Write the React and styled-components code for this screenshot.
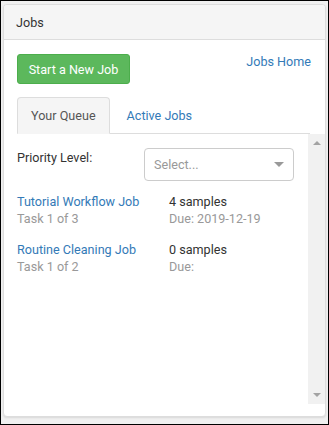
import React from "react";
import styled, { createGlobalStyle } from "styled-components";

const Global = createGlobalStyle`
  html, body { margin: 0; padding: 0; }
  body {
    width: 329px; height: 425px; box-sizing: border-box;
    border: 1px solid #000; background: #f0f0f0;
    font-family: Roboto, "Liberation Sans", sans-serif; font-size: 12.6px; color: #333;
    overflow: hidden;
  }
`;

const Panel = styled.div`
  margin: 3px 2px 0 2px;
  height: 413px;
  box-sizing: border-box;
  background: #fff;
  border: 1px solid #ddd;
  border-radius: 4px;
  box-shadow: 0 1px 2px rgba(0,0,0,0.1);
  display: flex;
  flex-direction: column;
  overflow: hidden;
`;

const Header = styled.div`
  height: 35px;
  box-sizing: border-box;
  padding: 0 12px;
  display: flex;
  align-items: center;
  background: #f5f5f5;
  border-bottom: 1px solid #ddd;
  color: #333;
`;

const Body = styled.div`
  flex: 1;
  display: flex;
  flex-direction: column;
  padding: 14px 15px 12px 13px;
  min-height: 0;
`;

const TopRow = styled.div`
  display: flex;
  justify-content: space-between;
  align-items: flex-start;
`;

const GreenButton = styled.button`
  height: 30px;
  width: 113px;
  padding: 0;
  border: 1px solid #4cae4c;
  border-radius: 3px;
  background: #5cb85c;
  color: #fff;
  font-family: inherit;
  font-size: 12.6px;
`;

const Link = styled.a`
  color: #337ab7;
  text-decoration: none;
  cursor: pointer;
  white-space: nowrap;
`;

const HomeLink = styled(Link)`
  margin-top: 0px;
  margin-right: -1px;
`;

const Tabs = styled.div`
  display: flex;
  margin-top: 13px;
  border-bottom: 1px solid #ddd;
  height: 37px;
  box-sizing: border-box;
`;

const Tab = styled.div`
  height: 37px;
  box-sizing: border-box;
  padding: 0 13px 1px;
  display: flex;
  align-items: center;
  white-space: nowrap;
  border: 1px solid ${p => (p.$active ? "#ddd" : "transparent")};
  border-bottom-color: ${p => (p.$active ? "#f5f5f5" : "transparent")};
  border-radius: 4px 4px 0 0;
  background: ${p => (p.$active ? "#f5f5f5" : "transparent")};
  color: ${p => (p.$active ? "#555" : "#337ab7")};
  margin-right: 3px;
`;

const Scroller = styled.div`
  flex: 1;
  margin: 0 -15px 0 -13px;
  display: flex;
  min-height: 0;
`;

const ScrollContent = styled.div`
  flex: 1;
  padding: 14px 0 0 13px;
  overflow: hidden;
`;

const Track = styled.div`
  width: 17px;
  background: #f1f1f1;
  display: flex;
  flex-direction: column;
  justify-content: space-between;
  align-items: center;
  padding: 7px 0 7px;
`;

const Arrow = styled.span`
  width: 0; height: 0;
  border-left: 4px solid transparent;
  border-right: 4px solid transparent;
  ${p => (p.$up ? "border-bottom: 4px solid #a3a3a3;" : "border-top: 4px solid #a3a3a3;")}
`;

const FilterRow = styled.div`
  display: grid;
  grid-template-columns: 127px 150px;
  align-items: start;
`;

const Label = styled.div`
  color: #333;
  line-height: 17px;
  margin-top: 1px;
`;

const Select = styled.div`
  height: 33px;
  box-sizing: border-box;
  border: 1px solid #ccc;
  border-radius: 4px;
  display: flex;
  align-items: center;
  justify-content: space-between;
  padding: 0 9px 0 9px;
  color: #999;
  background: #fff;
`;

const Caret = styled.span`
  width: 0; height: 0;
  border-left: 5px solid transparent;
  border-right: 5px solid transparent;
  border-top: 5px solid #999;
`;

const JobList = styled.div`
  display: flex;
  flex-direction: column;
  gap: 14px;
  margin-top: 12px;
`;

const JobRow = styled.div`
  display: grid;
  grid-template-columns: 152px 1fr;
  line-height: 17px;
`;

const Muted = styled.div`
  color: #999;
`;

const Dark = styled.div`
  color: #333;
`;

const jobs = [
  { name: "Tutorial Workflow Job", task: "Task 1 of 3", samples: "4 samples", due: "Due: 2019-12-19" },
  { name: "Routine Cleaning Job", task: "Task 1 of 2", samples: "0 samples", due: "Due:" },
];

export default function App() {
  return (
    <>
      <Global />
      <Panel>
        <Header>Jobs</Header>
        <Body>
          <TopRow>
            <GreenButton>Start a New Job</GreenButton>
            <HomeLink>Jobs Home</HomeLink>
          </TopRow>
          <Tabs>
            <Tab $active>Your Queue</Tab>
            <Tab>Active Jobs</Tab>
          </Tabs>
          <Scroller>
            <ScrollContent>
              <FilterRow>
                <Label>Priority Level:</Label>
                <Select>
                  <span>Select...</span>
                  <Caret />
                </Select>
              </FilterRow>
              <JobList>
                {jobs.map(j => (
                  <JobRow key={j.name}>
                    <div>
                      <Link>{j.name}</Link>
                      <Muted>{j.task}</Muted>
                    </div>
                    <div>
                      <Dark>{j.samples}</Dark>
                      <Muted>{j.due}</Muted>
                    </div>
                  </JobRow>
                ))}
              </JobList>
            </ScrollContent>
            <Track>
              <Arrow $up />
              <Arrow />
            </Track>
          </Scroller>
        </Body>
      </Panel>
    </>
  );
}
